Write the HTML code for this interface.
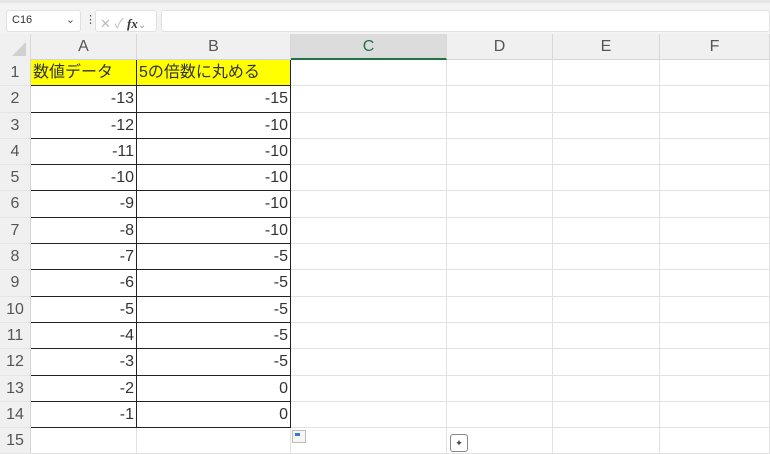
<!DOCTYPE html>
<html><head><meta charset="utf-8"><style>
*{box-sizing:border-box;margin:0;padding:0}
body{width:770px;height:454px;overflow:hidden;background:#fff;font-family:"Liberation Sans","Noto Sans CJK JP",sans-serif;position:relative}
.tb{position:absolute;left:0;top:0;width:770px;height:34px;background:#f3f3f3;border-top:3px solid #e6e6e6}
.box{position:absolute;background:#fff;border:1px solid #e0e0e0;border-radius:3px;height:22px;top:7px;font-size:11px;color:#333}
.hdr{position:absolute;top:34px;left:0;width:770px;height:26px;background:#f0f0f0;border-bottom:1px solid #d4d4d4}
.hc{position:absolute;top:0;height:26px;border-right:1px solid #d8d8d8;text-align:center;font-size:16px;line-height:26px;color:#555}
.rows{position:absolute;top:60px;left:0;width:770px}
.r{display:flex;height:26.3px}
.r div{border-right:1px solid #e2e2e2;border-bottom:1px solid #e2e2e2;font-size:16px;line-height:25px;color:#333;height:26.3px;white-space:nowrap;overflow:hidden}
.r .n{width:31px;background:#f0f0f0;color:#555;text-align:center;border-right:1px solid #d4d4d4;border-bottom:1px solid #e4e4e4}
.r .a{width:106px;text-align:right;padding-right:2px}
.r .b{width:154px;text-align:right;padding-right:2px}
.r .c{width:156px}.r .d{width:106px}.r .e{width:107px}.r .f{width:110px}
.k .a,.k .b{border-right:1px solid #222;border-bottom:1px solid #222}
.y div.a,.y div.b{background:#ffff00;text-align:left;padding-left:2px}
</style></head><body>
<div class="tb">
<div class="box" style="left:6px;width:75px;padding:3px 0 0 5px">C16<span style="position:absolute;right:5px;top:2px;color:#555">⌄</span></div>
<div style="position:absolute;left:85px;top:10px;font-size:11px;color:#555">⋮</div>
<div class="box" style="left:95px;width:62px;color:#bbb;padding:2px 0 0 4px;font-size:13px">✕ ✓ <i style="color:#333;font-family:'Liberation Serif';font-weight:bold">fx</i><span style="color:#999;font-size:10px">⌄</span></div>
<div class="box" style="left:161px;width:609px"></div>
</div>
<div class="hdr">
<div class="hc" style="left:0;width:31px;background:#f0f0f0"><svg width="31" height="26"><polygon points="26,8 26,22 12,22" fill="#d0d0d0"/></svg></div>
<div class="hc" style="left:31px;width:106px">A</div>
<div class="hc" style="left:137px;width:154px">B</div>
<div class="hc" style="left:291px;width:156px;background:#dcdcdc;color:#217346;border-bottom:2px solid #217346">C</div>
<div class="hc" style="left:447px;width:106px">D</div>
<div class="hc" style="left:553px;width:107px">E</div>
<div class="hc" style="left:660px;width:110px">F</div>
</div>
<div class="rows">
<div class="r k y"><div class="n">1</div><div class="a">数値データ</div><div class="b">5の倍数に丸める</div><div class="c"></div><div class="d"></div><div class="e"></div><div class="f"></div></div>
<div class="r k"><div class="n">2</div><div class="a">-13</div><div class="b">-15</div><div class="c"></div><div class="d"></div><div class="e"></div><div class="f"></div></div>
<div class="r k"><div class="n">3</div><div class="a">-12</div><div class="b">-10</div><div class="c"></div><div class="d"></div><div class="e"></div><div class="f"></div></div>
<div class="r k"><div class="n">4</div><div class="a">-11</div><div class="b">-10</div><div class="c"></div><div class="d"></div><div class="e"></div><div class="f"></div></div>
<div class="r k"><div class="n">5</div><div class="a">-10</div><div class="b">-10</div><div class="c"></div><div class="d"></div><div class="e"></div><div class="f"></div></div>
<div class="r k"><div class="n">6</div><div class="a">-9</div><div class="b">-10</div><div class="c"></div><div class="d"></div><div class="e"></div><div class="f"></div></div>
<div class="r k"><div class="n">7</div><div class="a">-8</div><div class="b">-10</div><div class="c"></div><div class="d"></div><div class="e"></div><div class="f"></div></div>
<div class="r k"><div class="n">8</div><div class="a">-7</div><div class="b">-5</div><div class="c"></div><div class="d"></div><div class="e"></div><div class="f"></div></div>
<div class="r k"><div class="n">9</div><div class="a">-6</div><div class="b">-5</div><div class="c"></div><div class="d"></div><div class="e"></div><div class="f"></div></div>
<div class="r k"><div class="n">10</div><div class="a">-5</div><div class="b">-5</div><div class="c"></div><div class="d"></div><div class="e"></div><div class="f"></div></div>
<div class="r k"><div class="n">11</div><div class="a">-4</div><div class="b">-5</div><div class="c"></div><div class="d"></div><div class="e"></div><div class="f"></div></div>
<div class="r k"><div class="n">12</div><div class="a">-3</div><div class="b">-5</div><div class="c"></div><div class="d"></div><div class="e"></div><div class="f"></div></div>
<div class="r k"><div class="n">13</div><div class="a">-2</div><div class="b">0</div><div class="c"></div><div class="d"></div><div class="e"></div><div class="f"></div></div>
<div class="r k"><div class="n">14</div><div class="a">-1</div><div class="b">0</div><div class="c"></div><div class="d"></div><div class="e"></div><div class="f"></div></div>
<div class="r"><div class="n">15</div><div class="a"></div><div class="b"></div><div class="c"></div><div class="d"></div><div class="e"></div><div class="f"></div></div>
</div>
<div style="position:absolute;left:292px;top:430px;width:14px;height:13px;border:1px solid #bbb;background:#f6f6f6"><div style="margin:2px;width:5px;height:3px;background:#3a78d8"></div></div>
<div style="position:absolute;left:450px;top:434px;width:18px;height:18px;border:1px solid #888;border-radius:3px;background:#fff;font-size:9px;text-align:center;line-height:16px;color:#444">✦</div>
</body></html>
